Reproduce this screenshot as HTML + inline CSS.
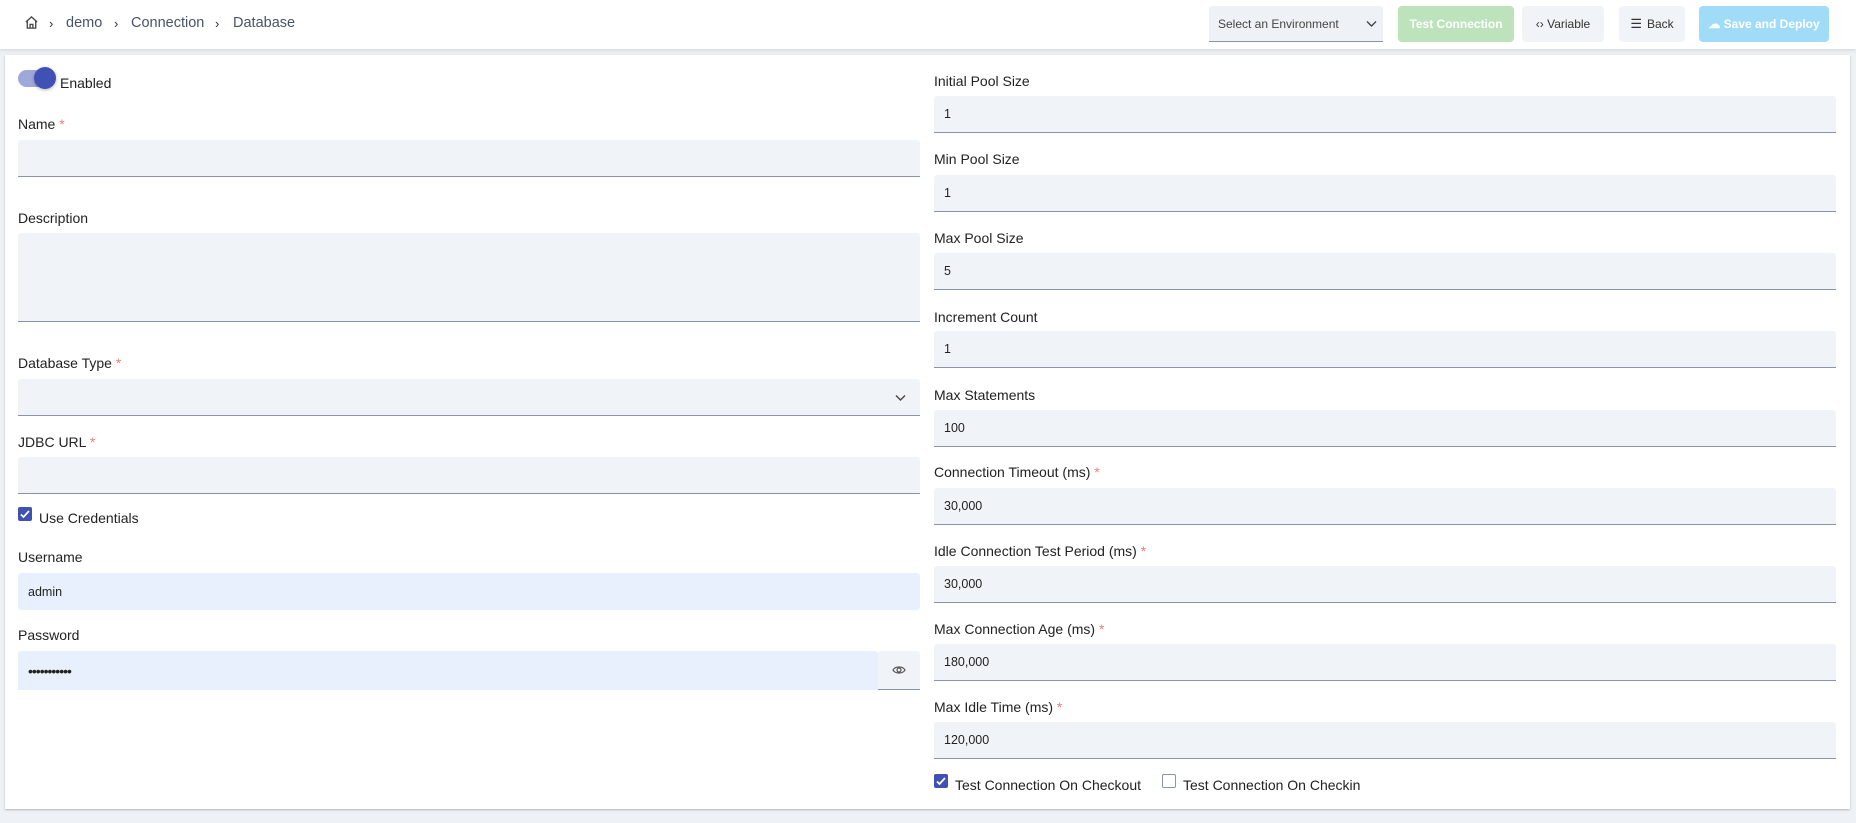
<!DOCTYPE html>
<html><head><meta charset="utf-8"><style>
*{box-sizing:border-box;margin:0;padding:0}
body{width:1856px;height:823px;background:#eef1f5;font-family:"Liberation Sans",sans-serif;color:#222;position:relative;overflow:hidden}
.hdr{position:absolute;left:0;top:0;width:1856px;height:49px;background:#fff;box-shadow:0 1px 4px rgba(0,0,0,.12)}
.a{position:absolute}
.bc{font-size:14.5px;color:#4a5366;top:15px}
.chev{font-size:13px;color:#333;top:16px}
.card{position:absolute;left:5px;top:55px;width:1845px;height:754px;background:#fff;box-shadow:0 1px 2px rgba(0,0,0,.25)}
.lbl{position:absolute;font-size:14px;color:#222}
.lbl i{color:#f07a7a;font-style:normal}
.in{position:absolute;background:#f0f3f7;border-bottom:1px solid #8a93a8;border-radius:3px 3px 0 0;font-size:12.5px;color:#222;padding-left:10px;display:flex;align-items:center}
.L{left:18px;width:902px}
.R{left:934px;width:902px}
.btn{position:absolute;top:6px;height:36px;border-radius:4px;font-size:12px;display:flex;align-items:center;justify-content:center}
.cb{position:absolute;width:14px;height:14px;border-radius:2px}
</style></head><body>
<div class="hdr">
<svg class="a" style="left:24px;top:15px" width="15" height="15" viewBox="0 0 16 16" fill="none" stroke="#444" stroke-width="1.4"><path d="M2 7.5L8 2l6 5.5M3.5 6.5V14h9V6.5M6.5 14v-4h3v4"/></svg>
<span class="a chev" style="left:49px">&#x203A;</span>
<span class="a bc" style="left:66px">demo</span>
<span class="a chev" style="left:114px">&#x203A;</span>
<span class="a bc" style="left:131px">Connection</span>
<span class="a chev" style="left:215px">&#x203A;</span>
<span class="a bc" style="left:233px">Database</span>

<div class="btn" style="left:1209px;width:174px;background:#eef2f7;border-bottom:1px solid #8a93a8;border-radius:3px 3px 0 0;justify-content:flex-start;padding-left:9px;color:#444">Select an Environment
<svg class="a" style="left:157px;top:14px" width="11" height="8" viewBox="0 0 11 8" fill="none" stroke="#444" stroke-width="1.4"><path d="M1 1.5l4.5 4.5L10 1.5"/></svg></div>
<div class="btn" style="left:1398px;width:116px;background:#bde3bd;color:#fff;font-weight:bold">Test Connection</div>
<div class="btn" style="left:1522px;width:82px;background:#f0f3f7;color:#333">&lsaquo;&rsaquo;&nbsp;Variable</div>
<div class="btn" style="left:1619px;width:66px;background:#f0f3f7;color:#333"><span style="font-size:13px;margin-right:5px">&#9776;</span>Back</div>
<div class="btn" style="left:1699px;width:130px;background:#a0dcf8;color:#fff;font-weight:bold">&#9729;&nbsp;Save and Deploy</div>
</div>

<div class="card"></div>

<div class="a" style="left:18px;top:70px;width:34px;height:17px;border-radius:9px;background:#9fa8da"></div>
<div class="a" style="left:34px;top:67px;width:22px;height:22px;border-radius:50%;background:#3f51b5;box-shadow:0 1px 3px rgba(0,0,0,.3)"></div>
<span class="lbl" style="left:60px;top:75px">Enabled</span>

<span class="lbl" style="left:18px;top:116px">Name <i>*</i></span>
<div class="in L" style="top:140px;height:37px"></div>
<span class="lbl" style="left:18px;top:210px">Description</span>
<div class="in L" style="top:233px;height:89px"></div>
<span class="lbl" style="left:18px;top:355px">Database Type <i>*</i></span>
<div class="in L" style="top:379px;height:37px"><svg class="a" style="left:877px;top:15px" width="11" height="8" viewBox="0 0 11 8" fill="none" stroke="#444" stroke-width="1.4"><path d="M1 1.5l4.5 4.5L10 1.5"/></svg></div>
<span class="lbl" style="left:18px;top:434px">JDBC URL <i>*</i></span>
<div class="in L" style="top:457px;height:37px"></div>
<div class="cb" style="left:18px;top:507px;background:#3f51b5"><svg width="14" height="14" viewBox="0 0 14 14" fill="none" stroke="#fff" stroke-width="1.8"><path d="M3 7.5l2.5 2.5L11 4"/></svg></div>
<span class="lbl" style="left:39px;top:510px">Use Credentials</span>
<span class="lbl" style="left:18px;top:549px">Username</span>
<div class="in L" style="top:573px;height:37px;background:#e8f0fe;border-bottom:none;border-radius:3px">admin</div>
<span class="lbl" style="left:18px;top:627px">Password</span>
<div class="in" style="left:18px;width:860px;top:651px;height:39px;background:#e8f0fe;border-bottom:none;font-size:14px;letter-spacing:-1px">•••••••••••</div>
<div class="in" style="left:878px;width:42px;top:651px;height:39px;background:#f0f3f7;justify-content:center;padding:0"><svg width="14" height="12" viewBox="0 0 14 12" fill="none" stroke="#555" stroke-width="1.2"><path d="M1 6c2-4 10-4 12 0c-2 4-10 4-12 0z"/><circle cx="7" cy="6" r="2"/></svg></div>

<span class="lbl" style="left:934px;top:73px">Initial Pool Size</span>
<div class="in R" style="top:96px;height:37px">1</div>
<span class="lbl" style="left:934px;top:151px">Min Pool Size</span>
<div class="in R" style="top:175px;height:37px">1</div>
<span class="lbl" style="left:934px;top:230px">Max Pool Size</span>
<div class="in R" style="top:253px;height:37px">5</div>
<span class="lbl" style="left:934px;top:309px">Increment Count</span>
<div class="in R" style="top:331px;height:37px">1</div>
<span class="lbl" style="left:934px;top:387px">Max Statements</span>
<div class="in R" style="top:410px;height:37px">100</div>
<span class="lbl" style="left:934px;top:464px">Connection Timeout (ms) <i>*</i></span>
<div class="in R" style="top:488px;height:37px">30,000</div>
<span class="lbl" style="left:934px;top:543px">Idle Connection Test Period (ms) <i>*</i></span>
<div class="in R" style="top:566px;height:37px">30,000</div>
<span class="lbl" style="left:934px;top:621px">Max Connection Age (ms) <i>*</i></span>
<div class="in R" style="top:644px;height:37px">180,000</div>
<span class="lbl" style="left:934px;top:699px">Max Idle Time (ms) <i>*</i></span>
<div class="in R" style="top:722px;height:37px">120,000</div>

<div class="cb" style="left:934px;top:774px;background:#3f51b5"><svg width="14" height="14" viewBox="0 0 14 14" fill="none" stroke="#fff" stroke-width="1.8"><path d="M3 7.5l2.5 2.5L11 4"/></svg></div>
<span class="lbl" style="left:955px;top:777px">Test Connection On Checkout</span>
<div class="cb" style="left:1162px;top:774px;border:1.5px solid #8a93a8"></div>
<span class="lbl" style="left:1183px;top:777px">Test Connection On Checkin</span>
</body></html>
